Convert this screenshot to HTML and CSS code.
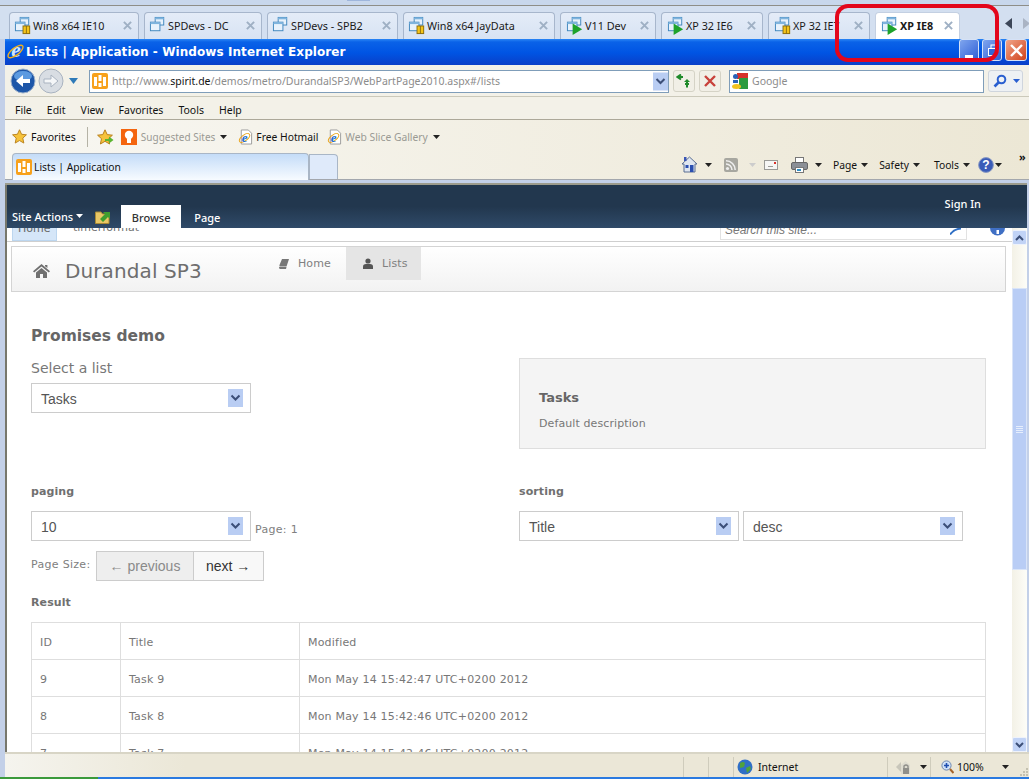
FILE: index.html
```html
<!DOCTYPE html>
<html lang="en">
<head>
    <meta charset="UTF-8">
    <meta name="viewport" content="width=device-width, initial-scale=1.0">
    <title>Lists | Application - Windows Internet Explorer</title>
    <link rel="stylesheet" href="styles.css">
</head>
<body>
    <svg class="sprite" xmlns="http://www.w3.org/2000/svg">
        <symbol id="vm" viewBox="0 0 20 20">
            <rect x="6.5" y="1.5" width="9" height="8" fill="#e8f2fc" stroke="#3f86bd"/>
            <rect x="6.5" y="1.5" width="9" height="2" fill="#7fb4de"/>
            <rect x="1.5" y="6.5" width="10" height="9" fill="#e8f2fc" stroke="#3f86bd"/>
            <rect x="1.5" y="6.5" width="10" height="2" fill="#7fb4de"/>
        </symbol>
        <symbol id="vm-play" viewBox="0 0 20 20">
            <use href="#vm"/>
            <path d="M7 8 L17 14 L7 20 Z" fill="#1ea32c"/>
        </symbol>
        <symbol id="vm-pause" viewBox="0 0 20 20">
            <use href="#vm"/>
            <rect x="9" y="10" width="8" height="9" fill="#8a6d12"/>
            <rect x="10" y="11" width="2.5" height="7" fill="#f5c518"/>
            <rect x="13.5" y="11" width="2.5" height="7" fill="#f5c518"/>
        </symbol>
        <symbol id="close" viewBox="0 0 10 10">
            <path d="M1 1 L9 9 M9 1 L1 9" stroke="#9fb0c4" stroke-width="2.2"/>
        </symbol>
        <symbol id="ie" viewBox="0 0 16 16">
            <text x="8.5" y="13.5" text-anchor="middle" font-family="Liberation Serif, serif" font-size="20" font-weight="700" font-style="italic" fill="#cfe6ff">e</text>
            <ellipse cx="8" cy="8" rx="8.5" ry="3.4" transform="rotate(-38 8 8)" fill="none" stroke="#eeb020" stroke-width="1.3"/>
        </symbol>
        <symbol id="ie-page" viewBox="0 0 16 16">
            <path d="M3.5 .5 H11 L14.5 4 V15.5 H3.5 Z" fill="#fff" stroke="#9a9a9a"/>
            <ellipse cx="7" cy="9" rx="6.5" ry="3" transform="rotate(-38 7 9)" fill="none" stroke="#e8a317"/>
            <text x="7" y="13" text-anchor="middle" font-family="Liberation Serif, serif" font-size="14" font-weight="700" font-style="italic" fill="#1f6fd0">e</text>
        </symbol>
        <symbol id="favicon" viewBox="0 0 16 16">
            <rect width="16" height="16" rx="2" fill="#f7a11c"/>
            <rect x="2" y="4" width="3" height="9" fill="#fff"/>
            <rect x="6.5" y="2" width="3" height="6" fill="#fff"/>
            <rect x="6.5" y="10" width="3" height="4" fill="#fff"/>
            <rect x="11" y="4" width="3" height="9" fill="#fff"/>
        </symbol>
        <symbol id="star" viewBox="0 0 16 16">
            <path d="M8 .8 L10.2 5.6 L15.4 6.2 L11.5 9.7 L12.6 15 L8 12.3 L3.4 15 L4.5 9.7 L.6 6.2 L5.8 5.6 Z" fill="#f6c33b" stroke="#b9801c"/>
        </symbol>
        <symbol id="caret" viewBox="0 0 7 4">
            <path d="M0 0 H7 L3.5 4 Z"/>
        </symbol>
        <symbol id="select-arrow" viewBox="0 0 15 18">
            <rect width="15" height="18" fill="#b9cdf3"/>
            <path d="M3.5 6.5 L7.5 10.5 L11.5 6.5" fill="none" stroke="#3c4f78" stroke-width="2"/>
        </symbol>
    </svg>

    <div class="window">
        <div class="top-strip"><span class="top-patch"></span></div>

        <div class="tabstrip">
            <div class="tab tab-1"><svg class="tab-icon"><use href="#vm-pause"/></svg><span class="tab-name">Win8 x64 IE10</span><svg class="tab-close"><use href="#close"/></svg></div>
            <div class="tab tab-2"><svg class="tab-icon"><use href="#vm"/></svg><span class="tab-name">SPDevs - DC</span><svg class="tab-close"><use href="#close"/></svg></div>
            <div class="tab tab-3"><svg class="tab-icon"><use href="#vm"/></svg><span class="tab-name">SPDevs - SPB2</span><svg class="tab-close"><use href="#close"/></svg></div>
            <div class="tab tab-4"><svg class="tab-icon"><use href="#vm-pause"/></svg><span class="tab-name">Win8 x64 JayData</span><svg class="tab-close"><use href="#close"/></svg></div>
            <div class="tab tab-5"><svg class="tab-icon"><use href="#vm-play"/></svg><span class="tab-name">V11 Dev</span><svg class="tab-close"><use href="#close"/></svg></div>
            <div class="tab tab-6"><svg class="tab-icon"><use href="#vm-play"/></svg><span class="tab-name">XP 32 IE6</span><svg class="tab-close"><use href="#close"/></svg></div>
            <div class="tab tab-7"><svg class="tab-icon"><use href="#vm-pause"/></svg><span class="tab-name">XP 32 IE7</span><svg class="tab-close"><use href="#close"/></svg></div>
            <div class="tab tab-8 tab-active"><svg class="tab-icon"><use href="#vm-play"/></svg><span class="tab-name">XP IE8</span><svg class="tab-close"><use href="#close"/></svg></div>
            <div class="tab-arrows">
                <svg width="7" height="11" viewBox="0 0 7 11"><path d="M7 0 V11 L0 5.5 Z" fill="#3c4658"/></svg>
                <svg width="7" height="11" viewBox="0 0 7 11"><path d="M0 0 V11 L7 5.5 Z" fill="#aab4c4"/></svg>
            </div>
        </div>

        <div class="titlebar">
            <svg class="title-icon"><use href="#ie"/></svg>
            <span class="title-text">Lists | Application - Windows Internet Explorer</span>
            <div class="win-buttons">
                <div class="win-btn"><svg width="19" height="21" viewBox="0 0 19 21"><rect x="5" y="15" width="8" height="3" fill="#fff"/></svg></div>
                <div class="win-btn"><svg width="19" height="21" viewBox="0 0 19 21"><rect x="8" y="5" width="7" height="6" fill="none" stroke="#fff"/><rect x="5.5" y="8.5" width="7" height="7" fill="#2f66d8" stroke="#fff"/></svg></div>
                <div class="win-btn win-btn-close"><svg width="21" height="21" viewBox="0 0 21 21"><path d="M5 5 L16 16 M16 5 L5 16" stroke="#fff" stroke-width="2.4"/></svg></div>
            </div>
        </div>

        <div class="addressbar">
            <div class="nav-pill">
                <svg width="26" height="26" viewBox="0 0 26 26"><circle cx="13" cy="13" r="12" fill="#1d56a8" stroke="#9fb3cc"/><ellipse cx="13" cy="8" rx="9" ry="5" fill="#5c9ae0"/><path d="M20 11 H13 V7 L6 13 L13 19 V15 H20 Z" fill="#fff"/></svg>
                <svg width="26" height="26" viewBox="0 0 26 26"><circle cx="13" cy="13" r="12" fill="#d8dde3" stroke="#a9b3c0"/><path d="M6 11 H13 V7 L20 13 L13 19 V15 H6 Z" fill="#f4f6f8" stroke="#a9b3c0"/></svg>
                <svg class="nav-drop" width="9" height="6" viewBox="0 0 9 6"><path d="M0 0 H9 L4.5 6 Z" fill="#2e7ab8"/></svg>
            </div>
            <div class="url-box">
                <svg class="url-icon"><use href="#favicon"/></svg>
                <span class="url-text">http://www.<b>spirit.de</b>/demos/metro/DurandalSP3/WebPartPage2010.aspx#/lists</span>
                <svg class="url-drop"><use href="#select-arrow"/></svg>
            </div>
            <div class="addr-btn"><svg width="16" height="14" viewBox="0 0 16 14"><path d="M7 3 H3 M5 0.5 L1.5 3 L5 5.5 M9 10 H13 M11 7 V13.5" fill="none" stroke="#1f8a2a" stroke-width="2"/><path d="M8 8 L11 5 L14 8" fill="#1f8a2a"/></svg></div>
            <div class="addr-btn"><svg width="12" height="12" viewBox="0 0 12 12"><path d="M1 1 L11 11 M11 1 L1 11" stroke="#c8413a" stroke-width="2.4"/></svg></div>
            <div class="search-box">
                <svg class="google-icon" width="16" height="16" viewBox="0 0 16 16"><rect x="5" width="11" height="6" fill="#d6322b"/><rect x="7" y="5" width="9" height="11" fill="#2b9b3f"/><circle cx="3.5" cy="3.5" r="2.5" fill="#2a62b8"/><rect x="1" y="7" width="5" height="3" fill="#2a62b8"/><ellipse cx="4.5" cy="13.5" rx="4.5" ry="2.5" fill="#f2c21f"/></svg>
                <span class="search-text">Google</span>
            </div>
            <div class="search-btn">
                <svg width="14" height="14" viewBox="0 0 14 14"><circle cx="8.5" cy="5.5" r="3.8" fill="none" stroke="#2a5fd0" stroke-width="2"/><path d="M6 8 L1.5 12.5" stroke="#2a5fd0" stroke-width="2.6"/></svg>
                <svg class="search-caret" width="7" height="4"><use href="#caret" fill="#2a5fd0"/></svg>
            </div>
        </div>

        <div class="menubar">
            <span class="menu-item">File</span>
            <span class="menu-item">Edit</span>
            <span class="menu-item">View</span>
            <span class="menu-item">Favorites</span>
            <span class="menu-item">Tools</span>
            <span class="menu-item">Help</span>
        </div>

        <div class="favbar">
            <svg class="fav-star"><use href="#star"/></svg>
            <span class="fav-label">Favorites</span>
            <span class="fav-sep"></span>
            <svg class="fav-add" width="17" height="16" viewBox="0 0 17 16"><use href="#star" width="16" height="16"/><path d="M8 10 H12 V7.5 L16.5 11 L12 14.5 V12 H8 Z" fill="#5cb531"/></svg>
            <svg class="fav-bulb" width="16" height="16" viewBox="0 0 16 16"><rect width="16" height="16" fill="#f4650f"/><circle cx="8" cy="6" r="4.2" fill="#fff"/><rect x="6" y="10" width="4" height="4" fill="#fff"/></svg>
            <span class="fav-link fav-grey fav-suggested">Suggested Sites</span>
            <svg class="caret fav-caret"><use href="#caret"/></svg>
            <svg class="fav-ie"><use href="#ie-page"/></svg>
            <span class="fav-link">Free Hotmail</span>
            <svg class="fav-ie"><use href="#ie-page"/></svg>
            <span class="fav-link fav-grey">Web Slice Gallery</span>
            <svg class="caret fav-caret"><use href="#caret"/></svg>
        </div>

        <div class="cmdbar">
            <div class="page-tab">
                <svg class="page-tab-icon"><use href="#favicon"/></svg>
                <span>Lists | Application</span>
            </div>
            <div class="new-tab"></div>
            <div class="tools">
                <svg class="tool-home" width="17" height="17" viewBox="0 0 17 17"><path d="M8.5 1 L16 8 H14 V16 H3 V8 H1 Z" fill="#dfe6f0" stroke="#5a6f92"/><rect x="9" y="9" width="3.5" height="7" fill="#2a4fb0"/><rect x="4.5" y="9" width="3" height="3" fill="#2a4fb0"/><rect x="3" y="1" width="2.5" height="4" fill="#3a55b5"/></svg>
                <svg class="caret caret-home"><use href="#caret"/></svg>
                <svg class="tool-rss" width="14" height="14" viewBox="0 0 14 14"><rect width="14" height="14" rx="2" fill="#a7a7a0"/><circle cx="3.5" cy="10.5" r="1.6" fill="#eee"/><path d="M2 6 A6 6 0 0 1 8 12 M2 2.8 A9.2 9.2 0 0 1 11.2 12" fill="none" stroke="#eee" stroke-width="1.6"/></svg>
                <svg class="caret caret-off"><use href="#caret"/></svg>
                <svg class="tool-mail" width="14" height="10" viewBox="0 0 14 10"><rect x=".5" y=".5" width="13" height="9" fill="#f6f6f4" stroke="#9a9a96"/><rect x="10" y="2" width="2" height="2" fill="#d9332b"/><rect x="4" y="6" width="5" height="1" fill="#9a9a96"/></svg>
                <svg class="tool-print" width="17" height="16" viewBox="0 0 17 16"><rect x="4.5" y=".5" width="8" height="6" fill="#fff" stroke="#777"/><rect x=".5" y="5.5" width="16" height="7" rx="1.5" fill="#8b8f96" stroke="#666"/><rect x="4.5" y="10.5" width="8" height="5" fill="#fff" stroke="#777"/><rect x="6" y="12" width="4" height="2" fill="#2f8fc4"/></svg>
                <svg class="caret caret-home"><use href="#caret"/></svg>
                <span class="tool-label">Page</span>
                <svg class="caret tool-caret"><use href="#caret"/></svg>
                <span class="tool-label">Safety</span>
                <svg class="caret tool-caret"><use href="#caret"/></svg>
                <span class="tool-label tool-tools">Tools</span>
                <svg class="caret tool-caret"><use href="#caret"/></svg>
                <svg class="tool-help" width="16" height="16" viewBox="0 0 16 16"><circle cx="8" cy="8" r="7.4" fill="#3a5cb8" stroke="#8b9bc4"/><text x="8" y="12.4" text-anchor="middle" font-family="Liberation Sans, sans-serif" font-size="12" font-weight="700" fill="#fff">?</text></svg>
                <svg class="caret tool-help-caret"><use href="#caret"/></svg>
                <span class="tool-more">&raquo;</span>
            </div>
        </div>

        <div class="client">
            <div class="ribbon">
                <span class="site-actions">Site Actions</span>
                <svg class="caret ribbon-caret"><use href="#caret" fill="#fff"/></svg>
                <svg class="ribbon-folder" width="17" height="15" viewBox="0 0 17 15"><path d="M.5 3 H6 L7.5 5 H14 V14.5 H.5 Z" fill="#e8c766" stroke="#a98a35"/><path d="M5 10 L10 5 L8 3 H15 V10 L13 8 L8 13 Z" fill="#3f9e2f"/></svg>
                <span class="ribbon-tab ribbon-tab-on">Browse</span>
                <span class="ribbon-tab">Page</span>
                <span class="sign-in">Sign In</span>
            </div>

            <div class="view">
                <div class="page">
                    <div class="site-row">
                        <span class="site-tab site-tab-on">Home</span>
                        <span class="site-tab">timerformat</span>
                        <div class="site-search">
                            <span>Search this site...</span>
                            <svg width="11" height="7" viewBox="0 0 11 7"><path d="M0 6.5 Q4 1 11 .5" fill="none" stroke="#2f6fc4" stroke-width="2"/></svg>
                        </div>
                        <svg class="site-help" width="15" height="8" viewBox="0 0 15 8"><path d="M0 0 H15 A7.5 7.5 0 0 1 0 0 Z" fill="#3f6fc4"/><rect x="6.5" y="2" width="2.5" height="4" fill="#fff"/></svg>
                    </div>

                    <div class="navbar">
                        <svg class="brand-icon" width="17" height="14" viewBox="0 0 17 14"><path d="M8.5 0 L17 7.2 L15.8 8.4 L8.5 2.4 L1.2 8.4 L0 7.2 Z M3 8.6 L8.5 4 L14 8.6 V14 H10 V10 H7 V14 H3 Z M12 1 H14.4 V4 L12 2.2 Z" fill="#707070"/></svg>
                        <span class="brand">Durandal SP3</span>
                        <div class="nav-item">
                            <svg width="10" height="10" viewBox="0 0 10 10"><path d="M3 0 H10 L7.5 7.5 H1 Q0 7.5 .5 6 Z M0 8 H7.5 L7 10 H1 Q0 10 0 8 Z" fill="#777"/></svg>
                            <span>Home</span>
                        </div>
                        <div class="nav-item nav-item-on">
                            <svg width="10" height="11" viewBox="0 0 10 11"><circle cx="5" cy="3" r="2.6" fill="#555"/><path d="M0 11 V8.5 Q0 6 3 6 H7 Q10 6 10 8.5 V11 Z" fill="#555"/></svg>
                            <span>Lists</span>
                        </div>
                    </div>

                    <div class="content">
                        <h2 class="heading">Promises demo</h2>

                        <div class="columns">
                            <div>
                                <div class="list-label">Select a list</div>
                                <div class="picker">
                                    <span>Tasks</span>
                                    <svg class="picker-arrow"><use href="#select-arrow"/></svg>
                                </div>
                            </div>
                            <div class="info-box">
                                <div class="info-title">Tasks</div>
                                <div class="info-desc">Default description</div>
                            </div>
                        </div>

                        <div class="columns columns-options">
                            <div>
                                <div class="small-head">paging</div>
                                <div class="picker-row">
                                    <div class="picker">
                                        <span>10</span>
                                        <svg class="picker-arrow"><use href="#select-arrow"/></svg>
                                    </div>
                                    <span class="page-no">Page: 1</span>
                                </div>
                            </div>
                            <div>
                                <div class="small-head">sorting</div>
                                <div class="picker-row">
                                    <div class="picker">
                                        <span>Title</span>
                                        <svg class="picker-arrow"><use href="#select-arrow"/></svg>
                                    </div>
                                    <div class="picker">
                                        <span>desc</span>
                                        <svg class="picker-arrow"><use href="#select-arrow"/></svg>
                                    </div>
                                </div>
                            </div>
                        </div>

                        <div class="pager-row">
                            <span class="page-size">Page Size:</span>
                            <div class="pager">
                                <span class="pager-btn pager-off">&larr; previous</span>
                                <span class="pager-btn">next &rarr;</span>
                            </div>
                        </div>

                        <div class="small-head result-head">Result</div>

                        <table class="grid">
                            <colgroup>
                                <col class="col-id">
                                <col class="col-title">
                                <col>
                            </colgroup>
                            <tr><td>ID</td><td>Title</td><td>Modified</td></tr>
                            <tr><td>9</td><td>Task 9</td><td>Mon May 14 15:42:47 UTC+0200 2012</td></tr>
                            <tr><td>8</td><td>Task 8</td><td>Mon May 14 15:42:46 UTC+0200 2012</td></tr>
                            <tr><td>7</td><td>Task 7</td><td>Mon May 14 15:42:46 UTC+0200 2012</td></tr>
                        </table>
                    </div>
                </div>

                <div class="scrollbar">
                    <div class="scroll-btn"><svg width="9" height="6" viewBox="0 0 9 6"><path d="M1 5 L4.5 1.5 L8 5" fill="none" stroke="#3c4f78" stroke-width="2"/></svg></div>
                    <div class="scroll-gap-top"></div>
                    <div class="scroll-thumb"><svg width="7" height="7" viewBox="0 0 7 7"><path d="M0 .5 H7 M0 2.5 H7 M0 4.5 H7 M0 6.5 H7" stroke="#e6eefc"/></svg></div>
                    <div class="scroll-gap-bottom"></div>
                    <div class="scroll-btn"><svg width="9" height="6" viewBox="0 0 9 6"><path d="M1 1 L4.5 4.5 L8 1" fill="none" stroke="#3c4f78" stroke-width="2"/></svg></div>
                </div>
            </div>
        </div>

        <div class="statusbar">
            <span class="status-cell status-main"></span>
            <span class="status-cell status-small"></span>
            <span class="status-cell status-small"></span>
            <span class="status-cell status-zone">
                <svg width="16" height="16" viewBox="0 0 16 16"><circle cx="8" cy="8" r="7.5" fill="#2f6fc6"/><path d="M3 4 Q6 2 8 4 L7 8 L3 9 Z M9 9 L13 7 L14 10 L10 14 Z" fill="#4fa23c"/></svg>
                <span>Internet</span>
            </span>
            <span class="status-cell status-lock">
                <svg width="16" height="14" viewBox="0 0 16 14"><path d="M0 7 L5 2 V12 Z" fill="#c8c6ba"/><path d="M5 5 L9.5 1 L14 5 V14 H5 Z" fill="#dedcd0"/><rect x="7" y="8" width="6" height="6" fill="#8f8f8a"/><path d="M8 8 V6 Q10 4 12 6 V8" fill="none" stroke="#8f8f8a" stroke-width="1.4"/></svg>
                <svg class="caret status-caret"><use href="#caret"/></svg>
            </span>
            <span class="status-cell status-zoom">
                <svg width="13" height="14" viewBox="0 0 13 14"><circle cx="5.5" cy="5.5" r="4.6" fill="#cfe1f8" stroke="#6e88b0"/><path d="M3 5.5 H8 M5.5 3 V8" stroke="#1f4fb0" stroke-width="1.6"/><path d="M9 9 L12.5 13" stroke="#a5642a" stroke-width="2"/></svg>
                <span>100%</span>
                <svg class="caret status-zoom-caret"><use href="#caret"/></svg>
                <svg class="status-grip" width="10" height="10" viewBox="0 0 10 10"><path d="M7 1 H9 V3 H7 Z M4 4 H6 V6 H4 Z M7 4 H9 V6 H7 Z M1 7 H3 V9 H1 Z M4 7 H6 V9 H4 Z M7 7 H9 V9 H7 Z" fill="#c4c1b0"/></svg>
            </span>
        </div>
        <div class="taskbar"><div class="task-start"></div></div>

        <div class="callout"></div>
    </div>
</body>
</html>
```

FILE: styles.css
```css
body {
    margin: 0;
    width: 1029px;
    height: 779px;
    overflow: hidden;
    font-family: "Noto Sans", sans-serif;
    font-size: 10.5px;
    color: #111;
    background-color: #c3d0e8;
}

.sprite {
    display: none;
}

.window {
    position: relative;
    display: flex;
    flex-direction: column;
    height: 779px;
}

.caret {
    width: 7px;
    height: 4px;
    fill: #222;
    flex: none;
}

/* vm manager tabs */
.top-strip {
    height: 6px;
    padding-left: 347px;
    background-color: #c8d7ec;
    border-bottom: 1px solid #8e8e88;
    box-sizing: border-box;
}

.top-patch {
    display: block;
    width: 23px;
    height: 1px;
    background-color: #9fb6dc;
}

.tabstrip {
    height: 33px;
    display: flex;
    align-items: flex-end;
    gap: 5px;
    padding-left: 9px;
    background-color: #d3dff0;
    box-sizing: border-box;
}

.tab {
    height: 27px;
    display: flex;
    align-items: center;
    padding-left: 4px;
    box-sizing: border-box;
    border: 1px solid #a7b6cc;
    border-bottom: none;
    border-radius: 4px 4px 0 0;
    background: linear-gradient(#e4ecf8, #d8e3f3);
    color: #1a1a1a;
    font-size: 10.8px;
    flex: none;
}

.tab-1 { width: 130px; }
.tab-2 { width: 118px; }
.tab-3 { width: 131px; }
.tab-4 { width: 152px; }
.tab-5 { width: 96px; padding-left: 5px; }
.tab-6 { width: 102px; padding-left: 5px; }
.tab-7 { width: 102px; padding-left: 5px; }
.tab-8 { width: 85px; padding-left: 5px; }

.tab-active {
    background: #fff;
    border-color: #c4d0e2;
    font-weight: 700;
}

.tab-icon {
    width: 19px;
    height: 19px;
    flex: none;
}

.tab-name {
    white-space: nowrap;
}

.tab-close {
    width: 9px;
    height: 9px;
    margin-left: auto;
    margin-right: 6px;
    flex: none;
}

.tab-arrows {
    display: flex;
    gap: 11px;
    margin-left: 40px;
    padding-bottom: 10px;
}

/* IE window */
.titlebar {
    height: 26px;
    margin-left: 5px;
    display: flex;
    align-items: center;
    background: linear-gradient(#2b86f5 0, #0a62e8 3px, #0054e3 14px, #0a3fc8 100%);
    color: #fff;
}

.title-icon {
    width: 17px;
    height: 17px;
    margin-left: 2px;
    flex: none;
}

.title-text {
    margin-left: 2px;
    padding-top: 1px;
    font-family: "DejaVu Sans", sans-serif;
    font-size: 12px;
    font-weight: 700;
    letter-spacing: .08px;
    white-space: nowrap;
}

.win-buttons {
    margin-left: auto;
    margin-right: 2px;
    padding-bottom: 3px;
    display: flex;
    gap: 3px;
}

.win-btn {
    width: 20px;
    height: 22px;
    box-sizing: border-box;
    border: 1px solid #d5e2f7;
    border-radius: 3px;
    background: linear-gradient(135deg, #7fa5ee, #2f5fd6);
    overflow: hidden;
}

.win-btn svg {
    display: block;
}

.win-btn-close {
    width: 22px;
    background: linear-gradient(135deg, #f0a58a, #d2431c);
}

.addressbar {
    height: 33px;
    margin-left: 5px;
    padding-top: 2px;
    display: flex;
    align-items: center;
    box-sizing: border-box;
    background-color: #f3f1e8;
    border-bottom: 1px solid #cbc9ba;
}

.nav-pill {
    display: flex;
    align-items: center;
    gap: 2px;
    margin-left: 5px;
    width: 79px;
    flex: none;
}

.nav-drop {
    margin-left: 3px;
}

.url-box {
    width: 580px;
    height: 23px;
    box-sizing: border-box;
    display: flex;
    align-items: center;
    border: 1px solid #7f9db9;
    background-color: #fff;
    flex: none;
}

.url-icon {
    width: 16px;
    height: 16px;
    margin-left: 2px;
    flex: none;
}

.url-text {
    margin-left: 4px;
    color: #8c8c8c;
    font-size: 10.5px;
    white-space: nowrap;
}

.url-text b {
    color: #111;
    font-weight: 400;
}

.url-drop {
    width: 15px;
    height: 19px;
    margin-left: auto;
    flex: none;
}

.addr-btn {
    width: 22px;
    height: 22px;
    box-sizing: border-box;
    margin-left: 4px;
    display: flex;
    align-items: center;
    justify-content: center;
    border: 1px solid #d5d3c6;
    border-radius: 3px;
    background-color: #f1efe6;
    flex: none;
}

.search-box {
    width: 255px;
    height: 23px;
    box-sizing: border-box;
    margin-left: 8px;
    display: flex;
    align-items: center;
    border: 1px solid #7f9db9;
    background-color: #fff;
    flex: none;
}

.google-icon {
    margin-left: 2px;
}

.search-text {
    margin-left: 4px;
    color: #8c8c8c;
}

.search-btn {
    width: 35px;
    height: 22px;
    box-sizing: border-box;
    margin-left: 4px;
    display: flex;
    align-items: center;
    padding-left: 4px;
    border: 1px solid #cfd5dd;
    border-radius: 3px;
    background-color: #eef1f4;
    flex: none;
}

.search-caret {
    margin-left: 6px;
}

.menubar {
    height: 23px;
    margin-left: 5px;
    padding-top: 3px;
    display: flex;
    align-items: center;
    gap: 15px;
    padding-left: 10px;
    box-sizing: border-box;
    background-color: #f3f1e8;
    border-bottom: 1px solid #aca899;
}

.favbar {
    height: 33px;
    margin-left: 5px;
    display: flex;
    align-items: center;
    background: linear-gradient(90deg, #f8f7f2, #ece7d5);
}

.fav-star {
    width: 15px;
    height: 15px;
    margin-left: 7px;
    flex: none;
}

.fav-label {
    margin-left: 4px;
}

.fav-sep {
    width: 1px;
    height: 20px;
    margin-left: 11px;
    background-color: #b5b3a6;
}

.fav-add {
    margin-left: 9px;
}

.fav-bulb {
    margin-left: 7px;
}

.fav-link {
    padding-top: 1px;
    font-size: 10.3px;
    white-space: nowrap;
}

.fav-suggested {
    margin-left: 4px;
    font-size: 10px;
}

.fav-grey {
    color: #9a9a94;
}

.fav-caret {
    margin-left: 5px;
    margin-right: 11px;
}

.fav-ie {
    width: 15px;
    height: 16px;
    margin-right: 3px;
    flex: none;
}

.fav-link + .fav-ie {
    margin-left: 9px;
}

.cmdbar {
    height: 27px;
    margin-left: 5px;
    padding-left: 7px;
    display: flex;
    align-items: flex-end;
    box-sizing: border-box;
    background: linear-gradient(90deg, #f8f7f2, #ece7d5);
    border-bottom: 1px solid #a3a7ad;
}

.page-tab {
    width: 297px;
    height: 27px;
    box-sizing: border-box;
    display: flex;
    align-items: center;
    padding-left: 3px;
    gap: 2px;
    border: 1px solid #a9b6c6;
    border-bottom: none;
    border-radius: 4px 4px 0 0;
    background: linear-gradient(#c4dcf8, #f7fbff);
    margin-bottom: -1px;
    font-size: 10.3px;
    flex: none;
}

.page-tab-icon {
    width: 16px;
    height: 16px;
    flex: none;
}

.new-tab {
    width: 29px;
    height: 25px;
    box-sizing: border-box;
    border: 1px solid #a9b6c6;
    border-bottom: none;
    border-radius: 0 4px 0 0;
    background-color: #dfeafa;
    flex: none;
}

.tools {
    flex: 1;
    min-width: 0;
    height: 100%;
    display: flex;
    align-items: center;
    padding-left: 343px;
    box-sizing: border-box;
    padding-bottom: 3px;
    font-size: 10.3px;
}

.caret-home {
    margin-left: 7px;
}

.caret-off {
    margin-left: 11px;
    fill: #ccc;
}

.tool-caret {
    margin-left: 4px;
}

.tool-rss {
    margin-left: 12px;
}

.tool-mail {
    margin-left: 8px;
}

.tool-print {
    margin-left: 13px;
}

.tool-label {
    margin-left: 11px;
    white-space: nowrap;
}

.tool-tools {
    margin-left: 14px;
}

.tool-help {
    margin-left: 8px;
}

.tool-help-caret {
    margin-left: 1px;
}

.tool-more {
    margin-left: 17px;
    margin-top: -16px;
    font-size: 11px;
    font-weight: 700;
}

/* page area */
.client {
    margin-top: 3px;
    margin-left: 5px;
    margin-right: 2px;
    padding-left: 2px;
    border-top: 2px solid #9c9b8c;
    background: linear-gradient(90deg, #77776c 0, #77776c 2px, transparent 2px);
    font-family: "DejaVu Sans", sans-serif;
    color: #6f6f6f;
}

.ribbon {
    height: 43px;
    display: flex;
    align-items: flex-end;
    box-sizing: border-box;
    padding-left: 5px;
    background: linear-gradient(#22374e 0, #22374e 50%, #2f4a68 100%);
    color: #fff;
    font-family: "Noto Sans", sans-serif;
    font-size: 11px;
}

.site-actions {
    margin-bottom: 4px;
    font-weight: 500;
}

.ribbon-caret {
    margin-left: 3px;
    margin-bottom: 10px;
}

.ribbon-folder {
    margin-left: 12px;
    margin-bottom: 4px;
}

.ribbon-tab {
    height: 23px;
    line-height: 26px;
    padding: 0 13px;
    font-weight: 500;
}

.ribbon-folder + .ribbon-tab {
    margin-left: 9px;
}

.ribbon-tab-on {
    width: 60px;
    padding: 0;
    text-align: center;
    background-color: #fff;
    color: #333;
}

.sign-in {
    margin-left: auto;
    margin-right: 46px;
    margin-bottom: 17px;
    font-weight: 500;
}

.view {
    height: 524px;
    display: flex;
    overflow: hidden;
    background-color: #fff;
}

.page {
    width: 1005px;
    flex: none;
    overflow: hidden;
}

.site-row {
    height: 14px;
    box-sizing: border-box;
    display: flex;
    border-bottom: 1px solid #cfcfcf;
    overflow: hidden;
}

.site-tab {
    height: 25px;
    margin-top: -12px;
    line-height: 24px;
    font-size: 11px;
    box-sizing: border-box;
    flex: none;
}

.site-tab-on {
    width: 45px;
    margin-left: 5px;
    padding-left: 5px;
    background-color: #d5e6f8;
    border: 1px solid #bcd6ef;
    color: #666;
}

.site-tab:not(.site-tab-on) {
    margin-left: 16px;
}

.site-search {
    width: 247px;
    height: 12px;
    margin-left: auto;
    padding: 0 5px 0 4px;
    box-sizing: border-box;
    display: flex;
    justify-content: space-between;
    align-items: flex-start;
    border: 1px solid #e2e2e2;
    border-top: none;
    overflow: hidden;
    font-family: "Liberation Sans", sans-serif;
    font-style: italic;
    font-size: 12px;
    color: #777;
}

.site-search span {
    margin-top: -5px;
}

.site-help {
    margin-left: 23px;
    margin-right: 7px;
    flex: none;
}

.navbar {
    height: 46px;
    margin: 4px 6px 0 4px;
    box-sizing: border-box;
    display: flex;
    align-items: flex-start;
    border: 1px solid #d4d4d4;
    background: linear-gradient(#fff, #f2f2f2);
}

.brand-icon {
    margin-left: 21px;
    margin-top: 17px;
    flex: none;
}

.brand {
    width: 199px;
    margin-left: 15px;
    margin-top: 11px;
    font-size: 20px;
    line-height: 26px;
    letter-spacing: .1px;
    color: #6e6e6e;
    flex: none;
}

.nav-item {
    width: 82px;
    height: 33px;
    box-sizing: border-box;
    display: flex;
    align-items: center;
    gap: 9px;
    padding-left: 15px;
    font-size: 11px;
    letter-spacing: .1px;
    color: #808080;
    flex: none;
}

.nav-item-on {
    width: 75px;
    padding-left: 17px;
    background-color: #e5e5e5;
}

.content {
    padding: 33px 25px 0 24px;
}

.heading {
    margin: 0 0 11px;
    font-size: 15.5px;
    line-height: 22px;
    color: #666;
}

.columns {
    display: grid;
    grid-template-columns: 488px 467px;
}

.columns-options {
    margin-top: 35px;
}

.list-label {
    height: 25px;
    line-height: 20px;
    font-size: 14px;
    color: #777;
}

.picker {
    width: 220px;
    height: 30px;
    box-sizing: border-box;
    display: flex;
    align-items: center;
    justify-content: space-between;
    padding: 0 7px 0 9px;
    border: 1px solid #ccc;
    font-family: "Liberation Sans", sans-serif;
    font-size: 14px;
    color: #555;
    flex: none;
}

.picker span {
    padding-top: 2px;
}

.picker-arrow {
    width: 15px;
    height: 18px;
    flex: none;
}

.info-box {
    height: 91px;
    box-sizing: border-box;
    padding: 31px 19px 0;
    border: 1px solid #dedede;
    background-color: #f4f4f4;
}

.info-title {
    font-size: 13px;
    line-height: 16px;
    font-weight: 700;
    color: #666;
}

.info-desc {
    margin-top: 10px;
    font-size: 11px;
    line-height: 16px;
    letter-spacing: .1px;
    color: #777;
}

.small-head {
    height: 14px;
    line-height: 16px;
    font-size: 11px;
    font-weight: 700;
    letter-spacing: .1px;
    color: #707070;
}

.picker-row {
    margin-top: 13px;
    display: flex;
    align-items: flex-end;
    gap: 4px;
}

.page-no {
    line-height: 23px;
    font-size: 11px;
    letter-spacing: .3px;
    color: #808080;
}

.pager-row {
    margin-top: 10px;
    display: flex;
    align-items: flex-start;
    gap: 5px;
}

.page-size {
    width: 60px;
    line-height: 28px;
    font-size: 11px;
    letter-spacing: .3px;
    white-space: nowrap;
    color: #808080;
}

.pager {
    display: flex;
    border: 1px solid #ccc;
    font-family: "Liberation Sans", sans-serif;
    font-size: 14px;
}

.pager-btn {
    height: 28px;
    line-height: 29px;
    padding: 0 13px 0 12px;
    color: #333;
    background-color: #f8f8f8;
}

.pager-off {
    width: 97px;
    box-sizing: border-box;
    text-align: center;
    padding: 0;
    color: #8a8a8a;
    background-color: #eee;
    border-right: 1px solid #ccc;
}

.result-head {
    margin-top: 14px;
}

.grid {
    width: 955px;
    margin-top: 13px;
    border-collapse: collapse;
    table-layout: fixed;
    font-size: 11px;
    letter-spacing: .2px;
    color: #777;
}

.col-id {
    width: 89px;
}

.col-title {
    width: 179px;
}

.grid td {
    height: 37px;
    padding: 2px 8px 0;
    box-sizing: border-box;
    border: 1px solid #dedede;
}

.scrollbar {
    width: 15px;
    display: flex;
    flex-direction: column;
    align-items: center;
    background: linear-gradient(90deg, #f3f1e6, #fdfdf8);
    box-sizing: border-box;
    padding-top: 2px;
    flex: none;
}

.scroll-btn {
    width: 15px;
    height: 15px;
    display: flex;
    align-items: center;
    justify-content: center;
    border: 1px solid #eef2fb;
    box-sizing: border-box;
    border-radius: 2px;
    background-color: #c1d3f6;
    flex: none;
}

.scroll-gap-top {
    height: 43px;
}

.scroll-gap-bottom {
    flex: 1;
}

.scroll-thumb {
    width: 15px;
    height: 282px;
    box-sizing: border-box;
    display: flex;
    align-items: center;
    justify-content: center;
    border: 1px solid #d9e4f8;
    background-color: #b9cdf5;
}

/* bottom */
.statusbar {
    height: 25px;
    margin-left: 5px;
    padding-top: 3px;
    display: flex;
    align-items: center;
    box-sizing: border-box;
    border-top: 2px solid #d8d5c6;
    background: linear-gradient(90deg, #f5f4ee, #ebe7d7 180px);
}

.status-cell {
    height: 20px;
    box-sizing: border-box;
    display: flex;
    align-items: center;
    border-left: 1px solid #cfccbc;
}

.status-main {
    width: 678px;
    border-left: none;
}

.status-small {
    width: 25px;
}

.status-zone {
    width: 154px;
    gap: 5px;
    padding-left: 3px;
}

.status-lock {
    width: 43px;
    padding-left: 8px;
}

.status-caret {
    margin-left: 8px;
}

.status-zoom {
    flex: 1;
    padding-left: 10px;
    gap: 3px;
}

.status-zoom-caret {
    margin-left: 15px;
}

.status-grip {
    margin-left: auto;
    align-self: flex-end;
}

.taskbar {
    height: 2px;
    background-color: #2a7ae0;
}

.task-start {
    width: 98px;
    height: 2px;
    background-color: #3b9a3b;
}

/* red annotation drawn over the screenshot */
.callout {
    position: absolute;
    left: 835px;
    top: 4px;
    width: 164px;
    height: 58px;
    box-sizing: border-box;
    border: 4px solid #e3061b;
    border-radius: 13px;
}
```
